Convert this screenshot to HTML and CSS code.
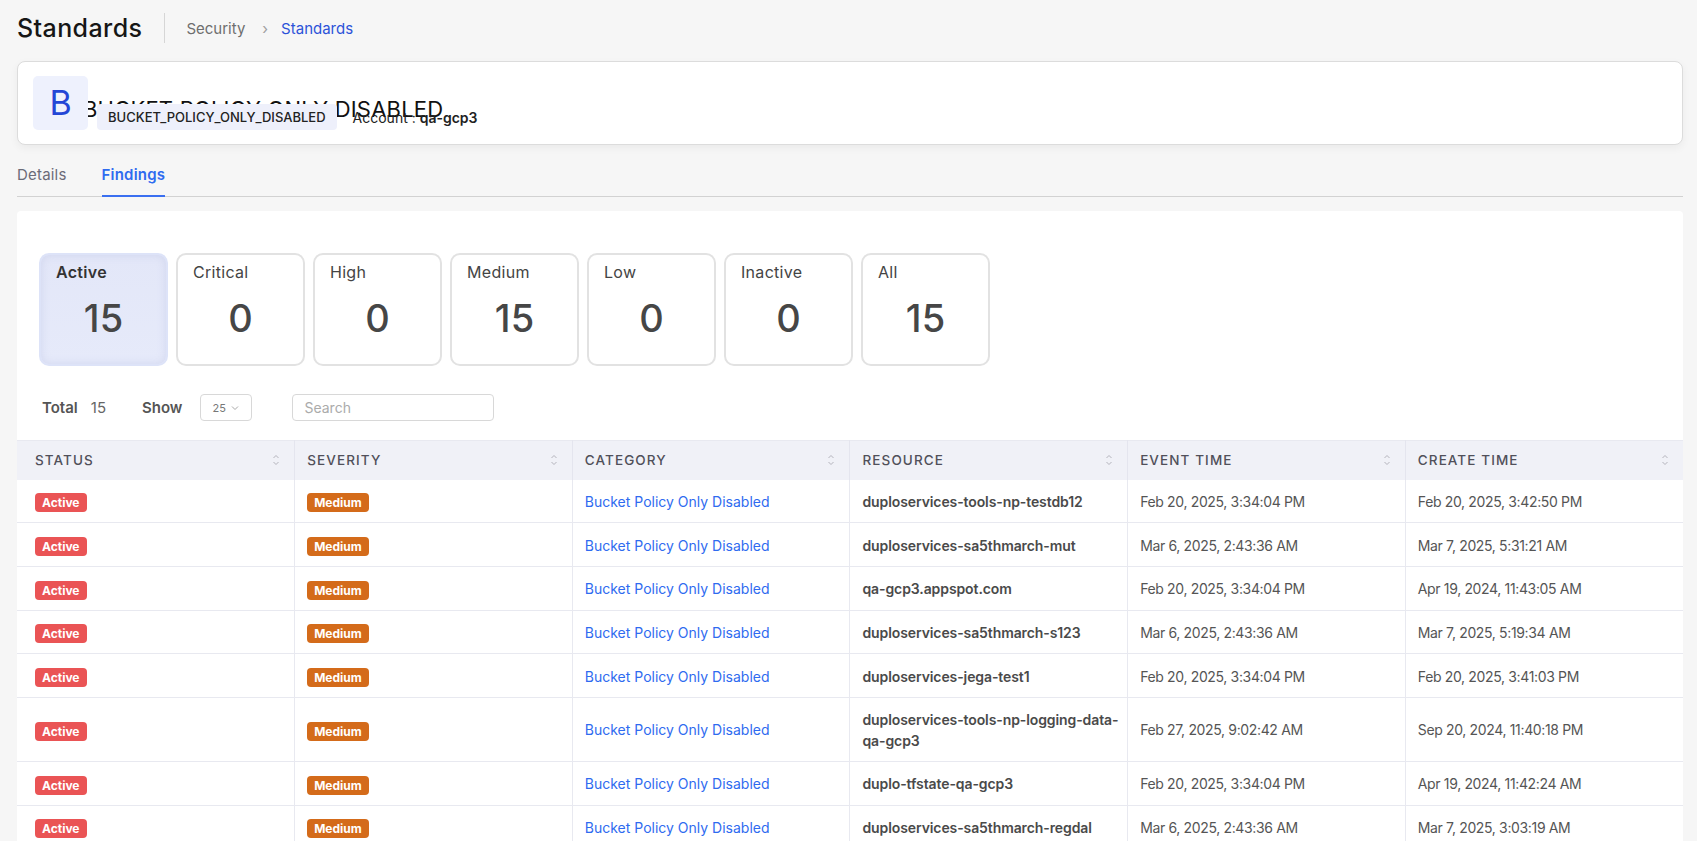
FILE: index.html
```html
<!DOCTYPE html>
<html lang="en">
<head>
<meta charset="utf-8">
<title>Standards</title>
<link rel="stylesheet" href="styles.css">
</head>
<body>
<div class="page">
  <div class="topbar">
    <h1 class="page-title">Standards</h1>
    <span class="divider"></span>
    <nav class="crumbs">
      <span class="crumb">Security</span>
      <span class="crumb-sep">›</span>
      <span class="crumb current">Standards</span>
    </nav>
  </div>

  <section class="head-card">
    <div class="avatar">B</div>
    <div class="info">
      <div class="info-title">BUCKET POLICY ONLY DISABLED</div>
      <div class="meta">
        <span class="code-badge">BUCKET_POLICY_ONLY_DISABLED</span>
        <span class="account">Account : <b>qa-gcp3</b></span>
      </div>
    </div>
  </section>

  <div class="tabs">
    <span class="tab">Details</span>
    <span class="tab active">Findings</span>
  </div>

  <section class="panel">
    <div class="stats">
      <div class="stat selected"><div class="stat-label">Active</div><div class="stat-num">15</div></div>
      <div class="stat"><div class="stat-label">Critical</div><div class="stat-num">0</div></div>
      <div class="stat"><div class="stat-label">High</div><div class="stat-num">0</div></div>
      <div class="stat"><div class="stat-label">Medium</div><div class="stat-num">15</div></div>
      <div class="stat"><div class="stat-label">Low</div><div class="stat-num">0</div></div>
      <div class="stat"><div class="stat-label">Inactive</div><div class="stat-num">0</div></div>
      <div class="stat"><div class="stat-label">All</div><div class="stat-num">15</div></div>
    </div>

    <div class="toolbar">
      <span class="tb-label">Total</span>
      <span class="tb-value">15</span>
      <span class="tb-label show">Show</span>
      <div class="select"><span>25</span>
        <svg width="8" height="6" viewBox="0 0 8 6"><path d="M1 1.5 L4 4.5 L7 1.5" fill="none" stroke="#a8a8a8" stroke-width="1"/></svg>
      </div>
      <div class="search">Search</div>
    </div>

    <table class="grid">
      <thead>
        <tr>
          <th><div class="th-in"><span>Status</span><svg class="sort" width="8" height="14" viewBox="0 0 8 14"><path d="M1.5 5 L4 2.5 L6.5 5 M1.5 9 L4 11.5 L6.5 9" fill="none" stroke="#b4b4bc" stroke-width="1"/></svg></div></th>
          <th><div class="th-in"><span>Severity</span><svg class="sort" width="8" height="14" viewBox="0 0 8 14"><path d="M1.5 5 L4 2.5 L6.5 5 M1.5 9 L4 11.5 L6.5 9" fill="none" stroke="#b4b4bc" stroke-width="1"/></svg></div></th>
          <th><div class="th-in"><span>Category</span><svg class="sort" width="8" height="14" viewBox="0 0 8 14"><path d="M1.5 5 L4 2.5 L6.5 5 M1.5 9 L4 11.5 L6.5 9" fill="none" stroke="#b4b4bc" stroke-width="1"/></svg></div></th>
          <th><div class="th-in"><span>Resource</span><svg class="sort" width="8" height="14" viewBox="0 0 8 14"><path d="M1.5 5 L4 2.5 L6.5 5 M1.5 9 L4 11.5 L6.5 9" fill="none" stroke="#b4b4bc" stroke-width="1"/></svg></div></th>
          <th><div class="th-in"><span>Event Time</span><svg class="sort" width="8" height="14" viewBox="0 0 8 14"><path d="M1.5 5 L4 2.5 L6.5 5 M1.5 9 L4 11.5 L6.5 9" fill="none" stroke="#b4b4bc" stroke-width="1"/></svg></div></th>
          <th><div class="th-in"><span>Create Time</span><svg class="sort" width="8" height="14" viewBox="0 0 8 14"><path d="M1.5 5 L4 2.5 L6.5 5 M1.5 9 L4 11.5 L6.5 9" fill="none" stroke="#b4b4bc" stroke-width="1"/></svg></div></th>
        </tr>
      </thead>
      <tbody>
        <tr>
          <td><span class="pill red">Active</span></td>
          <td><span class="pill orange">Medium</span></td>
          <td class="link">Bucket Policy Only Disabled</td>
          <td class="res">duploservices-tools-np-testdb12</td>
          <td class="time">Feb 20, 2025, 3:34:04 PM</td>
          <td class="time">Feb 20, 2025, 3:42:50 PM</td>
        </tr>
        <tr>
          <td><span class="pill red">Active</span></td>
          <td><span class="pill orange">Medium</span></td>
          <td class="link">Bucket Policy Only Disabled</td>
          <td class="res">duploservices-sa5thmarch-mut</td>
          <td class="time">Mar 6, 2025, 2:43:36 AM</td>
          <td class="time">Mar 7, 2025, 5:31:21 AM</td>
        </tr>
        <tr>
          <td><span class="pill red">Active</span></td>
          <td><span class="pill orange">Medium</span></td>
          <td class="link">Bucket Policy Only Disabled</td>
          <td class="res">qa-gcp3.appspot.com</td>
          <td class="time">Feb 20, 2025, 3:34:04 PM</td>
          <td class="time">Apr 19, 2024, 11:43:05 AM</td>
        </tr>
        <tr>
          <td><span class="pill red">Active</span></td>
          <td><span class="pill orange">Medium</span></td>
          <td class="link">Bucket Policy Only Disabled</td>
          <td class="res">duploservices-sa5thmarch-s123</td>
          <td class="time">Mar 6, 2025, 2:43:36 AM</td>
          <td class="time">Mar 7, 2025, 5:19:34 AM</td>
        </tr>
        <tr>
          <td><span class="pill red">Active</span></td>
          <td><span class="pill orange">Medium</span></td>
          <td class="link">Bucket Policy Only Disabled</td>
          <td class="res">duploservices-jega-test1</td>
          <td class="time">Feb 20, 2025, 3:34:04 PM</td>
          <td class="time">Feb 20, 2025, 3:41:03 PM</td>
        </tr>
        <tr>
          <td><span class="pill red">Active</span></td>
          <td><span class="pill orange">Medium</span></td>
          <td class="link">Bucket Policy Only Disabled</td>
          <td class="res nowrap">duploservices-tools-np-logging-data-<br>qa-gcp3</td>
          <td class="time">Feb 27, 2025, 9:02:42 AM</td>
          <td class="time">Sep 20, 2024, 11:40:18 PM</td>
        </tr>
        <tr>
          <td><span class="pill red">Active</span></td>
          <td><span class="pill orange">Medium</span></td>
          <td class="link">Bucket Policy Only Disabled</td>
          <td class="res">duplo-tfstate-qa-gcp3</td>
          <td class="time">Feb 20, 2025, 3:34:04 PM</td>
          <td class="time">Apr 19, 2024, 11:42:24 AM</td>
        </tr>
        <tr>
          <td><span class="pill red">Active</span></td>
          <td><span class="pill orange">Medium</span></td>
          <td class="link">Bucket Policy Only Disabled</td>
          <td class="res">duploservices-sa5thmarch-regdal</td>
          <td class="time">Mar 6, 2025, 2:43:36 AM</td>
          <td class="time">Mar 7, 2025, 3:03:19 AM</td>
        </tr>
      </tbody>
    </table>
  </section>
</div>
</body>
</html>
```

FILE: styles.css
```css
* { box-sizing: border-box; }

body {
  margin: 0;
  background: #f6f6f6;
  font-family: Inter, "Noto Sans", "Liberation Sans", sans-serif;
  color: #333;
}

.page {
  padding: 0 14px 0 17px;
}

/* top bar */
.topbar {
  height: 56px;
  display: flex;
  align-items: center;
}
.page-title {
  margin: 0;
  font-size: 25px;
  font-weight: 500;
  letter-spacing: 0.4px;
  color: #161616;
  line-height: 30px;
}
.divider {
  width: 1px;
  height: 30px;
  background: #d6d6d6;
  margin-left: 22px;
}
.crumbs {
  margin-left: 21px;
  display: flex;
  align-items: center;
  font-size: 15px;
}
.crumb { color: #6e6e6e; }
.crumb-sep {
  color: #a0a0a0;
  margin: 0 13px 0 17px;
  font-size: 15px;
}
.crumb.current { color: #2c53d9; }

/* header card */
.head-card {
  margin-top: 5px;
  background: #fff;
  border: 1px solid #dcdcdc;
  border-radius: 8px;
  box-shadow: 0 3px 8px rgba(0, 0, 0, 0.05);
  padding: 14px 15px;
  display: flex;
  align-items: flex-end;
}
.avatar {
  position: relative;
  z-index: 1;
  width: 55px;
  height: 54px;
  border-radius: 5px;
  background: #eef1fd;
  color: #2346d6;
  font-size: 34px;
  line-height: 54px;
  text-align: center;
  flex: none;
}
.info {
  margin-left: 9px;
  display: flex;
  flex-direction: column;
}
.info-title {
  margin-left: -14px;
  font-size: 22px;
  line-height: 26px;
  letter-spacing: 0.2px;
  color: #111;
  white-space: nowrap;
}
.meta {
  margin-top: -18px;
  display: flex;
  align-items: center;
  position: relative;
}
.code-badge {
  height: 26px;
  line-height: 26px;
  padding: 0 11px;
  background: #eef0fb;
  border-radius: 4px;
  font-size: 13px;
  font-weight: 500;
  color: #222;
}
.account {
  margin-left: 16px;
  font-size: 14px;
  color: #222;
}
.account b { font-weight: 600; }

/* tabs */
.tabs {
  margin-top: 20px;
  display: flex;
  gap: 35px;
  border-bottom: 1px solid #d2d2d2;
}
.tab {
  font-size: 15px;
  letter-spacing: 0.2px;
  line-height: 20px;
  padding-bottom: 11px;
  color: #6b6b78;
}
.tab.active {
  color: #2f6bf0;
  font-weight: 600;
  border-bottom: 2px solid #3a6ff0;
  margin-bottom: -1px;
  padding-bottom: 10px;
}

/* panel */
.panel {
  margin-top: 14px;
  background: #fff;
  border-radius: 4px 4px 0 0;
  padding-top: 42px;
}
.stats {
  display: flex;
  gap: 8px;
  padding-left: 22px;
}
.stat {
  width: 129px;
  height: 113px;
  border: 2px solid #e2e2e2;
  border-radius: 10px;
  background: #fff;
}
.stat.selected {
  background: linear-gradient(180deg, #e3e7f8 0%, #e6eafa 100%);
  border-color: #dde3f8;
  box-shadow: inset 0 0 8px rgba(150, 160, 210, 0.25);
}
.stat-label {
  padding: 7px 0 0 15px;
  font-size: 16px;
  letter-spacing: 0.3px;
  line-height: 20px;
  color: #444;
}
.stat.selected .stat-label {
  font-weight: 600;
  color: #333;
}
.stat-num {
  margin-top: 13px;
  text-align: center;
  font-size: 38px;
  line-height: 46px;
  font-weight: 500;
  color: #464646;
}

/* toolbar */
.toolbar {
  margin-top: 28px;
  padding-left: 25px;
  display: flex;
  align-items: center;
  font-size: 15px;
}
.tb-label {
  font-weight: 600;
  color: #555;
}
.tb-value {
  margin-left: 13px;
  color: #666;
}
.tb-label.show { margin-left: 36px; }
.select {
  margin-left: 18px;
  width: 52px;
  height: 27px;
  border: 1px solid #d8d8d8;
  border-radius: 4px;
  display: flex;
  align-items: center;
  padding-left: 11px;
  gap: 5px;
  font-size: 11px;
  color: #777;
}
.search {
  margin-left: 40px;
  width: 202px;
  height: 27px;
  border: 1px solid #d8d8d8;
  border-radius: 4px;
  padding-left: 11px;
  line-height: 25px;
  font-size: 14px;
  color: #ababab;
}

/* table */
.grid {
  margin-top: 19px;
  width: 100%;
  border-collapse: collapse;
  table-layout: fixed;
}
.grid th {
  background: #f0f1f7;
  height: 39px;
  padding: 0 14px 0 12px;
  text-align: left;
  font-size: 13.5px;
  font-weight: 500;
  letter-spacing: 1.1px;
  text-transform: uppercase;
  color: #50505a;
  border-right: 1px solid #e4e5ee;
  border-top: 1px solid #e8e9f0;
}
.grid th:last-child,
.grid td:last-child { border-right: none; }
.th-in {
  display: flex;
  align-items: center;
  justify-content: space-between;
}
.sort { flex: none; }
.grid th:first-child,
.grid td:first-child { padding-left: 18px; }

.grid td {
  padding: 11px 12px 10px;
  line-height: 21px;
  font-size: 14px;
  border-bottom: 1px solid #e8e9f0;
  border-right: 1px solid #e8e9f0;
  vertical-align: middle;
}
.pill {
  display: inline-block;
  height: 19px;
  line-height: 19px;
  padding: 0 7px;
  border-radius: 4px;
  font-size: 12px;
  font-weight: 700;
  color: #fff;
  vertical-align: middle;
}
.pill.red { background: #ea5455; }
.pill.orange { background: #d46b1a; }
.grid td.link { color: #2f6bf0; }
.grid td.res {
  color: #4a4a4a;
  font-weight: 600;
  letter-spacing: -0.1px;
}
.grid td.nowrap { white-space: nowrap; }
.grid td.time {
  color: #555;
  letter-spacing: -0.35px;
}
```
